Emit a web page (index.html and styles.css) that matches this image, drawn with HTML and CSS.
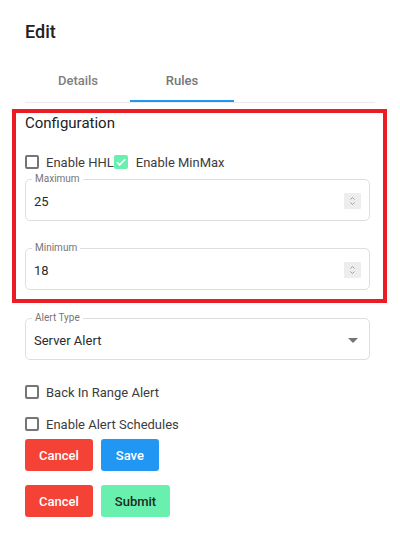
FILE: index.html
```html
<!DOCTYPE html>
<html lang="en">
<head>
  <meta charset="UTF-8">
  <meta name="viewport" content="width=device-width, initial-scale=1.0">
  <link rel="stylesheet" href="styles.css">
  <title>Edit</title>
</head>
<body>
<div class="dialog">
  <h2 class="title">Edit</h2>

  <div class="tabs">
    <div class="tab">Details</div>
    <div class="tab active">Rules</div>
  </div>

  <div class="config">
    <h3 class="config-title">Configuration</h3>

    <div class="check-row">
      <label class="check">
        <span class="box"></span>
        <span>Enable HHL</span>
      </label>
      <label class="check">
        <span class="box checked">
          <svg viewBox="0 0 14 14" width="14" height="14"><path d="M3 7.3l2.6 2.6L11.2 4.3" fill="none" stroke="#fff" stroke-width="1.6"/></svg>
        </span>
        <span>Enable MinMax</span>
      </label>
    </div>

    <fieldset class="field">
      <legend>Maximum</legend>
      <div class="field-row">
        <span class="value">25</span>
        <span class="spin">
          <svg viewBox="0 0 17 16" width="17" height="16"><path d="M6.5 6.5l2-2 2 2M6.5 9.5l2 2 2-2" fill="none" stroke="#9e9e9e" stroke-width="1"/></svg>
        </span>
      </div>
    </fieldset>

    <fieldset class="field spaced">
      <legend>Minimum</legend>
      <div class="field-row">
        <span class="value">18</span>
        <span class="spin">
          <svg viewBox="0 0 17 16" width="17" height="16"><path d="M6.5 6.5l2-2 2 2M6.5 9.5l2 2 2-2" fill="none" stroke="#9e9e9e" stroke-width="1"/></svg>
        </span>
      </div>
    </fieldset>
  </div>

  <fieldset class="field alert-type">
    <legend>Alert Type</legend>
    <div class="field-row">
      <span class="value">Server Alert</span>
      <span class="caret"></span>
    </div>
  </fieldset>

  <label class="check single first">
    <span class="box"></span>
    <span>Back In Range Alert</span>
  </label>
  <label class="check single">
    <span class="box"></span>
    <span>Enable Alert Schedules</span>
  </label>

  <div class="actions">
    <button class="btn cancel">Cancel</button>
    <button class="btn save">Save</button>
  </div>
  <div class="actions second">
    <button class="btn cancel">Cancel</button>
    <button class="btn submit">Submit</button>
  </div>
</div>
</body>
</html>
```

FILE: styles.css
```css
body {
  margin: 0;
  padding: 0;
  font-family: Roboto, "Liberation Sans", Arial, sans-serif;
  background: #fff;
  color: rgba(0, 0, 0, 0.82);
}

.dialog {
  width: 400px;
  box-sizing: border-box;
  padding: 21px 30px 0 25px;
}

.title {
  margin: 0;
  font-size: 18px;
  font-weight: 500;
  line-height: 21px;
  color: #212121;
}

.tabs {
  display: flex;
  margin-top: 14px;
  margin-right: -5px;
  border-bottom: 1px solid #ebebeb;
}

.tab {
  width: 104px;
  text-align: center;
  font-size: 13px;
  font-weight: 500;
  line-height: 16px;
  padding: 17px 0 11px;
  border-bottom: 2px solid transparent;
  color: #808080;
}

.tab:first-child {
  margin-left: 1px;
}

.tab.active {
  border-bottom-color: #2196f3;
  color: #777;
}

.config {
  margin: 6px -17px 0 -13px;
  border: 4px solid #ec1c24;
  padding: 1px 13px 9px 9px;
}

.config-title {
  margin: 0;
  font-size: 15px;
  font-weight: 400;
  line-height: 19px;
  color: #222;
}

.check-row {
  display: flex;
  margin-top: 20px;
}

.check {
  display: flex;
  align-items: center;
  height: 18px;
  font-size: 13px;
  color: #3c3c3c;
}

.check .box {
  width: 14px;
  height: 14px;
  box-sizing: border-box;
  border: 2px solid #757575;
  border-radius: 2px;
  margin-right: 7px;
}

.check .box.checked {
  border: none;
  background: #69f0ae;
  margin-right: 8px;
}

.check .box svg {
  display: block;
}

.field {
  margin: 2px 0 0;
  padding: 0 8px 3px;
  border: 1px solid #dedede;
  border-radius: 5px;
  min-width: 0;
}

.field legend {
  font-size: 10px;
  line-height: 12px;
  color: #757575;
  padding: 0 3px;
  margin-left: -2px;
}

.field.spaced {
  margin-top: 21px;
}

.field-row {
  display: flex;
  align-items: center;
  justify-content: space-between;
  height: 32px;
  font-size: 13px;
  color: #2a2a2a;
}

.spin {
  width: 17px;
  height: 16px;
  background: #ededed;
  border-radius: 1px;
}

.spin svg {
  display: block;
}

.alert-type {
  margin-top: 9px;
}

.caret {
  width: 0;
  height: 0;
  border-left: 5px solid transparent;
  border-right: 5px solid transparent;
  border-top: 5px solid #757575;
  margin-right: 3px;
}

.check.single {
  margin-top: 14px;
}

.check.single.first {
  margin-top: 23px;
}

.actions {
  display: flex;
  gap: 8px;
  margin-top: 6px;
}

.actions.second {
  margin-top: 14px;
}

.btn {
  height: 32px;
  padding: 0 14px;
  border: none;
  border-radius: 3px;
  font-family: Roboto, "Liberation Sans", Arial, sans-serif;
  font-size: 13px;
  font-weight: 500;
  color: #fff;
  cursor: pointer;
}

.btn.cancel {
  background: #f44336;
}

.btn.save {
  background: #2196f3;
  padding: 0 15px;
}

.btn.submit {
  background: #69f0ae;
  color: #1f2a22;
}
```
